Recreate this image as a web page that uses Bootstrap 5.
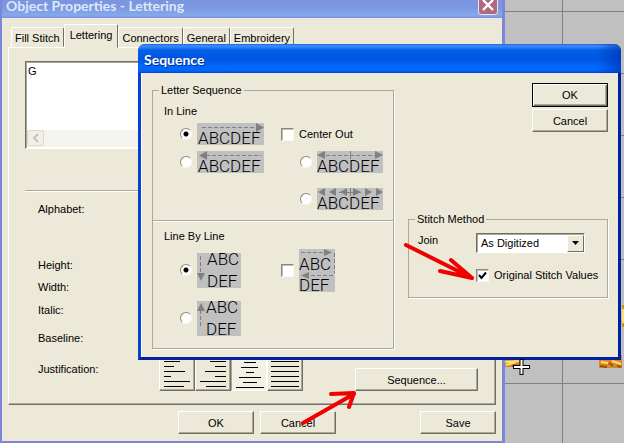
<!DOCTYPE html>
<html lang="en">
<head>
<meta charset="utf-8">
<meta name="viewport" content="width=device-width, initial-scale=1">
<title>Object Properties - Lettering</title>
<link href="https://cdn.jsdelivr.net/npm/bootstrap@5.3.0/dist/css/bootstrap.min.css" rel="stylesheet">
<style>
:root { --face: #ece9d8; --shade: #aca899; --dark: #716f64; --ui: "Liberation Sans", Arial, sans-serif; }
body { font: 11px/14px var(--ui); color: #000; min-height: 100vh; overflow: hidden; }
.desk { min-height: 100vh; background-color: #c0c0c0;
  background-image: linear-gradient(90deg, #808080 1px, transparent 1px), linear-gradient(#808080 1px, transparent 1px);
  background-size: 62px 62px; background-position: 4px 11px; }
.win { background: var(--face); }
.win-title { font-family: Lato, "Open Sans", sans-serif; font-weight: 700; font-size: 14px; line-height: 18px; }
.win-main { top: -10px; left: 0; right: 119px; border: 2px solid #7b86dc; border-top: 0; border-right-width: 3px; }
.win-main > .win-title { height: 28px; padding: 0 4px; color: #dfe7fa; background: linear-gradient(#7a93df, #7b97e0 60%, #85a8ec 90%, #7894e0); }
.close-btn { width: 20px; height: 20px; margin-top: 2px; padding: 0; border: 1px solid #e6e3f4; border-radius: 3px; background: #b06a7c; line-height: 0; }
.win-seq { top: 44px; left: 138px; right: 3px; border: 3px solid #0a3fd0; border-top: 0; border-bottom-color: #0020a0; border-right-color: #0020a8; border-radius: 7px 7px 0 0; box-shadow: inset 1px 0 0 #fff; }
.win-seq > .win-title { height: 29px; margin: 0 -3px; padding: 2px 6px 0; color: #fff; text-shadow: 1px 1px 0 #0a2c90; border-radius: 7px 7px 0 0;
  background: linear-gradient(90deg, transparent 95%, #0030b0a0), linear-gradient(#2a5fd8 0, #3a90ff 2px, #0560e8 6px, #0054e0 14px, #0068ff 23px, #0066fa 27px, #003cc8 29px); }
.seq-body { padding: 10px 10px 8px 11px; gap: 14px; }

.push { height: 23px; padding: 0; border-radius: 0; font: 11px/14px var(--ui); color: #000; background: var(--face);
  border: 1px solid; border-color: #fff var(--dark) var(--dark) #fff; box-shadow: inset -1px -1px 0 var(--shade); }
.push:hover { background: var(--face); color: #000; border-color: #fff var(--dark) var(--dark) #fff; }
.w-std { width: 76px; }
.push-default, .push-default:hover { height: 24px; border-color: #000; box-shadow: inset 1px 1px 0 #fff, inset -1px -1px 0 var(--dark), inset -2px -2px 0 var(--shade); }
.ok-stack { gap: 2px; }

.tabs { padding: 6px 0 0 9px; }
.tabs .nav-link { margin: 2px 0 0; padding: 3px 3px 1px; color: #000; line-height: 14px; border: 1px solid; border-color: #fff var(--dark) transparent #fff; border-radius: 2px 2px 0 0; }
.tabs .nav-link.active { margin: 0 0 -1px; padding: 3px 5px 5px; background: var(--face); position: relative; border-bottom-color: var(--face); }
.pane { margin: 0 6px 0 6px; padding: 13px 17px 13px 16px; border: 1px solid; border-color: #fff var(--dark) var(--dark) #fff; box-shadow: inset -1px -1px 0 var(--shade); }
.sunken { border: 1px solid; border-color: var(--dark) #fff #fff var(--dark); box-shadow: inset 1px 1px 0 var(--shade); background: #fff; }
.lettering-box textarea { display: block; width: 100%; height: 68px; padding: 2px; border: 0; resize: none; background: transparent; outline: 0; overflow: hidden; line-height: 14px; }
.hscroll { height: 17px; background: #f4f3ee; margin: 0 1px 1px; }
.hscroll button { width: 17px; height: 16px; padding: 0; border: 1px solid #dcdad0; border-radius: 2px; background: #f1efe6; line-height: 0; }
.rule { border-top: 1px solid var(--shade); border-bottom: 1px solid #fff; margin: 41px 0 5px; }
.field { display: grid; grid-template-columns: 121px auto; align-items: center; justify-content: start; padding-left: 13px; }
.field input { width: 80px; height: 18px; }
.h22 { height: 22px; } .h24 { height: 24px; } .h32 { height: 32px; } .h37 { height: 37px; }
.gap-row { margin-top: 33px; }
.align-btn { width: 36px; height: 37px; padding: 0; line-height: 0; }
.align-btn.pressed { border-color: var(--shade) #fff #fff var(--shade); box-shadow: none; background: #f3f1e6; }
.side { width: 123px; gap: 8px; }
.actions { padding: 6px 6px 7px 176px; gap: 6px; }

fieldset.group { border: 1px solid var(--shade); box-shadow: 1px 1px 0 #fff; }
fieldset.group > legend { float: none; width: auto; margin: 0 0 0 6px; padding: 0 2px; font-size: 11px; line-height: 14px; background: var(--face); }
.letter-group { width: 242px; }
.sub { padding: 7px 0 0 11px; line-height: 14px; }
.choices { display: grid; grid-template-columns: 101px auto; justify-content: start; padding-left: 27px; align-items: center; }
.choices.inline { grid-template-rows: 28px 28px 46px; padding-top: 2px; margin-bottom: -2px; }
.choices.lines { grid-template-rows: 48px 48px; padding: 3px 0 6px 27px; }
.divide { border-top: 1px solid var(--shade); box-shadow: inset 0 1px 0 #fff; }
.opt { display: flex; align-items: center; gap: 5px; }
.opt.inset { padding-left: 19px; }
.opt svg { display: block; background: #c0c0c0; overflow: visible; }
.opt svg text { font: 300 17px Roboto, "Liberation Sans", Arial, sans-serif; fill: #000; }
.opt input { appearance: none; flex: none; margin: 0; width: 12px; height: 12px; background: #fff; border: 1px solid; border-color: #8c897c #f8f7f0 #f8f7f0 #8c897c; }
.opt input[type=radio] { border-radius: 50%; }
.opt input[type=radio]:checked { background: radial-gradient(circle, #000 0 2px, #fff 3px); }
.opt input[type=checkbox] { width: 13px; height: 13px; box-shadow: inset 1px 1px 0 #c4c1b4; }
.tick { position: relative; display: flex; }
.tick svg { position: absolute; inset: 0; background: none; pointer-events: none; }
.stitch-group { margin-top: 80px; }
.stitch-body { display: grid; grid-template-columns: 58px auto; justify-content: start; row-gap: 15px; padding: 7px 0 15px 9px; }
.stitch-body .opt { grid-column: 2; }
.join { position: relative; width: 109px; }
.join select { appearance: none; width: 100%; height: 20px; padding: 0 4px; border-radius: 0; outline: 0; font: 11px/14px var(--ui); color: #000; }
.join span { position: absolute; top: 2px; right: 1px; bottom: 1px; width: 17px; background: var(--face); border: 1px solid; border-color: #fff var(--dark) var(--dark) #fff; pointer-events: none; }
.join svg { display: block; margin: 5px auto 0; }
.over { position: absolute; top: 0; left: 0; pointer-events: none; }
</style>
<script src="https://cdn.jsdelivr.net/npm/bootstrap@5.3.0/dist/js/bootstrap.bundle.min.js"></script>
</head>
<body>
<main class="desk position-relative overflow-hidden">

  <!-- embroidery on the design canvas -->
  <svg class="over" width="624" height="443" aria-hidden="true">
    <g fill="#d88a28"><path d="M504 355h16v12h-16zM599 355h23v13h-23zM622 305h2v22h-2z"/></g>
    <path d="M504 362l15-1M506 365l10-3M601 362l7 1M612 361l9 3M623 309v14" stroke="#ffdf70" stroke-width="2"/>
    <path d="M600 366l7 1M609 363l4 3M617 366l4 1M512 366l5-1" stroke="#965018" stroke-width="2"/>
  </svg>

  <section class="win win-main position-absolute">
    <div class="win-title d-flex align-items-center justify-content-between">
      <span class="pt-1">Object Properties - Lettering</span>
      <button class="close-btn" type="button" aria-label="Close"><svg width="16" height="16"><path d="M3 3l10 10M13 3L3 13" stroke="#fff" stroke-width="2.4"/></svg></button>
    </div>
    <nav class="nav tabs align-items-end">
      <a class="nav-link" href="#">Fill Stitch</a>
      <a class="nav-link active" href="#">Lettering</a>
      <a class="nav-link" href="#">Connectors</a>
      <a class="nav-link" href="#">General</a>
      <a class="nav-link" href="#">Embroidery</a>
    </nav>
    <div class="pane">
      <div class="sunken lettering-box">
        <textarea aria-label="Lettering text">G</textarea>
        <div class="hscroll"><button type="button" aria-label="Scroll left"><svg width="12" height="12"><path d="M8 2L4 6l4 4" fill="none" stroke="#c6c3b8" stroke-width="2"/></svg></button></div>
      </div>
      <div class="rule"></div>
      <div class="d-flex justify-content-between">
        <div>
          <div class="field h24"><label for="f1">Alphabet:</label><input class="sunken" id="f1"></div>
          <div class="field h22 gap-row"><label for="f2">Height:</label><input class="sunken" id="f2"></div>
          <div class="field h22"><label for="f3">Width:</label><input class="sunken" id="f3"></div>
          <div class="field h24"><label for="f4">Italic:</label><input class="sunken" id="f4"></div>
          <div class="field h32"><label for="f5">Baseline:</label><input class="sunken" id="f5"></div>
          <div class="field h37">
            <span id="just" class="pb-2">Justification:</span>
            <div class="d-flex" role="group" aria-labelledby="just">
              <button class="btn push align-btn" type="button" aria-label="Left"><svg width="34" height="35"><path d="M4 6.500h16M4 11.500h10M4 16.500h21M4 21.500h7M4 26.500h26M4 31.500h20" stroke="#000"/></svg></button>
              <button class="btn push align-btn" type="button" aria-label="Right"><svg width="34" height="35"><path d="M14 6.500h16M19 11.500h11M9 16.500h21M19 21.500h11M4 26.500h26M10 31.500h20" stroke="#000"/></svg></button>
              <button class="btn push align-btn pressed" type="button" aria-label="Centre"><svg width="34" height="35"><path d="M12 7.500h12M9 12.500h17M14 17.500h8M7 22.500h22M11 27.500h14M4 32.500h28" stroke="#000"/></svg></button>
              <button class="btn push align-btn" type="button" aria-label="Full"><svg width="34" height="35"><path d="M3 6.500h28M3 11.500h28M3 16.500h28M3 21.500h28M3 26.500h28M3 31.500h28" stroke="#000"/></svg></button>
            </div>
          </div>
        </div>
        <div class="side d-flex flex-column align-self-end">
          <button class="btn push" type="button" aria-label="More"></button>
          <button class="btn push" type="button">Sequence...</button>
        </div>
      </div>
    </div>
    <div class="actions d-flex">
      <button class="btn push w-std" type="button">OK</button>
      <button class="btn push w-std" type="button">Cancel</button>
      <button class="btn push w-std ms-auto" type="button">Save</button>
    </div>
  </section>

  <section class="win win-seq position-absolute">
    <div class="win-title d-flex align-items-center">Sequence</div>
    <form class="seq-body d-flex">
      <fieldset class="group letter-group">
        <legend>Letter Sequence</legend>
        <div class="sub">In Line</div>
        <div class="choices inline">
          <label class="opt"><input type="radio" name="inline" checked>
            <svg width="67" height="22"><path d="M5 4.500h54" stroke="#808080" stroke-dasharray="4 2"/><path d="M59 0v9l8-4.500z" fill="#808080"/><text x="1" y="21">ABCDEF</text></svg></label>
          <label class="opt"><input type="checkbox"> Center Out</label>
          <label class="opt"><input type="radio" name="inline">
            <svg width="67" height="22"><path d="M9 4.500h55" stroke="#808080" stroke-dasharray="4 2"/><path d="M10 0v9L2 4.500z" fill="#808080"/><text x="1" y="21">ABCDEF</text></svg></label>
          <label class="opt inset"><input type="radio" name="inline">
            <svg width="66" height="22"><path d="M9 4.500h50" stroke="#808080" stroke-dasharray="4 2"/><path d="M33.500 0v8" stroke="#808080"/><path d="M8 0v8L0 4zM58 0v8l8-4z" fill="#808080"/><text x="0" y="21">ABCDEF</text></svg></label>
          <span></span>
          <label class="opt inset"><input type="radio" name="inline">
            <svg width="66" height="22"><path d="M22 4.500h22M33.500 0v8" stroke="#808080"/><path d="M8 0v8L1 4zM19 0v8l-7-4zM30 0v8l-7-4zM36 0v8l8-4zM48 0v8l7-4zM59 0v8l7-4z" fill="#808080"/><text x="0" y="21">ABCDEF</text></svg></label>
        </div>
        <div class="divide">
          <div class="sub pt-2">Line By Line</div>
          <div class="choices lines">
            <label class="opt"><input type="radio" name="lines" checked>
              <svg width="44" height="35"><path d="M3.500 3v18" stroke="#808080" stroke-dasharray="4 2"/><path d="M0 20h8l-4 8z" fill="#808080"/><text x="10" y="12">ABC</text><text x="10" y="34">DEF</text></svg></label>
            <label class="opt"><input type="checkbox">
              <svg width="36" height="43"><path d="M2 3.500h24M35.500 4v20M34 26.500H10" fill="none" stroke="#808080" stroke-dasharray="4 2"/><path d="M25 0v7l8-3.500zM10 23v7l-8-3.500z" fill="#808080"/><text x="0" y="21">ABC</text><text x="0" y="42">DEF</text></svg></label>
            <label class="opt"><input type="radio" name="lines">
              <svg width="44" height="35"><path d="M3.500 9v18" stroke="#808080" stroke-dasharray="4 2"/><path d="M0 10h8L4 2z" fill="#808080"/><text x="9" y="12">ABC</text><text x="9" y="34">DEF</text></svg></label>
          </div>
        </div>
      </fieldset>
      <div class="flex-grow-1">
        <div class="ok-stack d-flex flex-column align-items-end">
          <button class="btn push push-default w-std" type="button">OK</button>
          <button class="btn push w-std" type="button">Cancel</button>
        </div>
        <fieldset class="group stitch-group">
          <legend>Stitch Method</legend>
          <div class="stitch-body">
            <label for="join">Join</label>
            <div class="join"><select id="join" class="sunken"><option>As Digitized</option></select><span><svg width="7" height="4"><path d="M0 0h7L3.500 4z"/></svg></span></div>
            <label class="opt"><span class="tick"><input type="checkbox" checked><svg width="13" height="13"><path d="M3 6l2.500 3L10 3.500" fill="none" stroke="#000" stroke-width="2"/></svg></span>Original Stitch Values</label>
          </div>
        </fieldset>
      </div>
    </form>
  </section>

  <!-- crosshair and red pointer arrows drawn over both windows -->
  <svg class="over" width="624" height="443" aria-hidden="true">
    <path d="M513 367h17M521.500 359v16" stroke="#000" stroke-width="4"/>
    <path d="M514 367h15M521.500 360v14" stroke="#fff" stroke-width="2"/>
    <g fill="none" stroke="#f00000" stroke-width="4" stroke-linecap="round" stroke-linejoin="round">
      <path d="M406 245l66 33M451 260l21 18-32-7"/>
      <path d="M303 423l51-29M331 394l23-1-5 14"/>
    </g>
  </svg>
</main>
</body>
</html>
